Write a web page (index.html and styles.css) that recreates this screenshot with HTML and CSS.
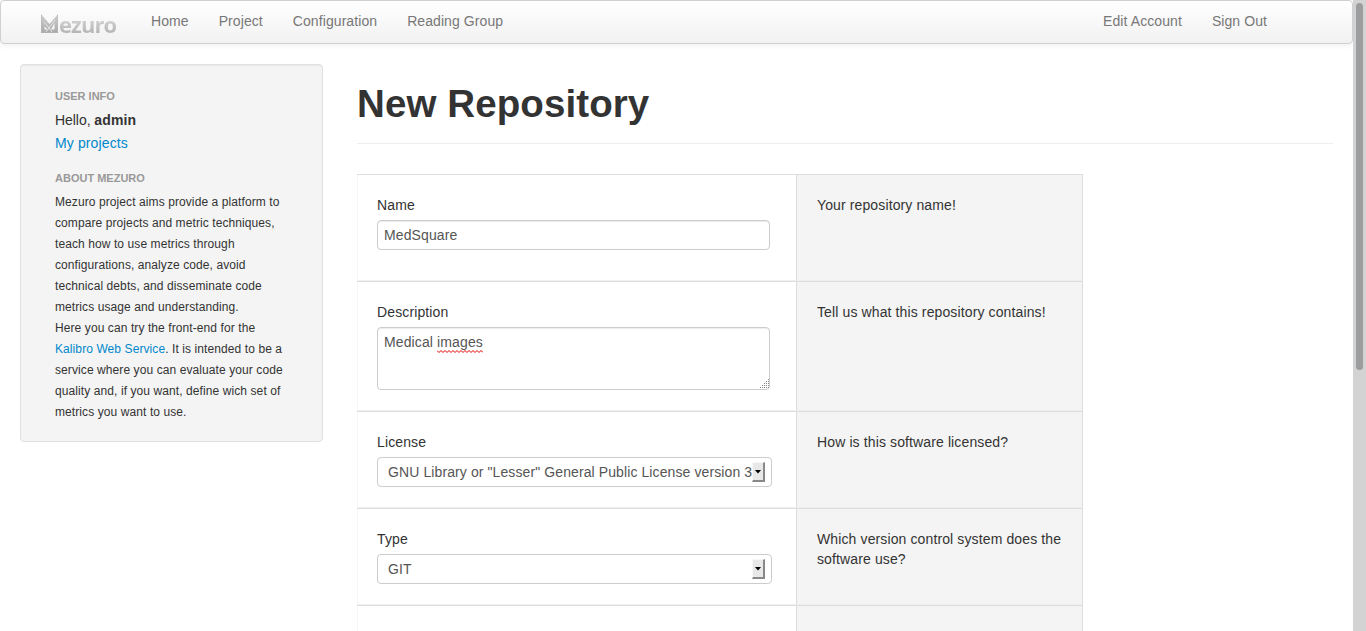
FILE: index.html
```html
<!DOCTYPE html>
<html lang="en">
<head>
<meta charset="utf-8">
<title>New Repository</title>
<link rel="stylesheet" href="styles.css">
</head>
<body>
<div class="window">
  <div class="page">
    <nav class="navbar">
      <a class="brand" aria-label="Mezuro">
        <svg class="brand-mark" width="18" height="20" viewBox="0 0 18 20">
          <defs><linearGradient id="g" x1="0" y1="0" x2="0" y2="1"><stop offset="0" stop-color="#d2d2d2"/><stop offset="1" stop-color="#a8a8a8"/></linearGradient></defs>
          <path d="M0 0L8.500 10L17 0V19H0Z" fill="url(#g)"/>
          <path d="M3.500 12.500L7 15.500H3.500ZM13.500 9V15.500H10Z" fill="#f4f4f4"/>
          <path d="M3 8l9 11M14 6L5 18" stroke="#e4e4e4" stroke-width="1" fill="none"/>
          <path d="M.5 1V18.500H16.500V1" fill="none" stroke="#b8b8b8" stroke-dasharray="1 1"/>
        </svg><span class="brand-text">ezuro</span>
      </a>
      <div class="links"><a>Home</a><a>Project</a><a>Configuration</a><a>Reading Group</a></div>
      <div class="links account"><a>Edit Account</a><a>Sign Out</a></div>
    </nav>
    <div class="columns">
      <aside class="well">
        <h2 class="nav-header">USER INFO</h2>
        <p class="hello">Hello, <b>admin</b></p>
        <p class="mine"><a class="link">My projects</a></p>
        <h2 class="nav-header about-title">ABOUT MEZURO</h2>
        <p class="about">
          <span>Mezuro project aims provide a platform to</span>
          <span>compare projects and metric techniques,</span>
          <span>teach how to use metrics through</span>
          <span>configurations, analyze code, avoid</span>
          <span>technical debts, and disseminate code</span>
          <span>metrics usage and understanding.</span>
          <span>Here you can try the front-end for the</span>
          <span><a class="link">Kalibro Web Service</a>. It is intended to be a</span>
          <span>service where you can evaluate your code</span>
          <span>quality and, if you want, define wich set of</span>
          <span>metrics you want to use.</span>
        </p>
      </aside>
      <main class="main">
        <h1 class="title">New Repository</h1>
        <div class="form">
          <div class="row row-name">
            <div class="field"><label class="label">Name</label><div class="control input">MedSquare</div></div>
            <div class="help">Your repository name!</div>
          </div>
          <div class="row row-desc">
            <div class="field"><label class="label">Description</label>
              <div class="control area">Medical <span class="misspelt">images<svg class="wave" width="46" height="3" viewBox="0 0 46 3"><path d="M0 .5L2 2.500L4 .5L6 2.500L8 .5L10 2.500L12 .5L14 2.500L16 .5L18 2.500L20 .5L22 2.500L24 .5L26 2.500L28 .5L30 2.500L32 .5L34 2.500L36 .5L38 2.500L40 .5L42 2.500L44 .5L46 2.500" fill="none" stroke="#e00000"/></svg></span>
                <svg class="grip" width="10" height="10" viewBox="0 0 10 10"><path d="M9.500 0V10M7.500 2V10M5.500 4V10M3.500 6V10M1.500 8V10" stroke="#888" stroke-dasharray="1 1" fill="none"/></svg>
              </div></div>
            <div class="help">Tell us what this repository contains!</div>
          </div>
          <div class="row row-select">
            <div class="field"><label class="label">License</label><div class="control select"><span class="license">GNU Library or "Lesser" General Public License version 3</span><i class="arrow"></i></div></div>
            <div class="help">How is this software licensed?</div>
          </div>
          <div class="row row-select">
            <div class="field"><label class="label">Type</label><div class="control select"><span>GIT</span><i class="arrow"></i></div></div>
            <div class="help">Which version control system does the<br>software use?</div>
          </div>
          <div class="row row-next"><div class="field"></div><div class="help"></div></div>
        </div>
      </main>
    </div>
  </div>
  <div class="scrollbar"><div class="thumb"></div></div>
</div>
</body>
</html>
```
FILE: styles.css
```css
* { box-sizing: border-box; }
body {
  margin: 0;
  overflow: hidden;
  color: #333;
  background: #fff;
  font: 14px/20px "Liberation Sans", Arial, sans-serif;
  letter-spacing: .12px;
}
p, h1, h2 { margin: 0; }
.window { display: flex; height: 631px; overflow: hidden; }
.page { width: 1353px; }
.navbar {
  display: flex;
  height: 44px;
  padding: 0 70px 0 40px;
  border: 1px solid #d0d0d0;
  border-radius: 4px;
  background: linear-gradient(#fff, #f1f1f1);
  box-shadow: 0 1px 6px rgba(0, 0, 0, .08);
}
.brand { display: flex; width: 94px; padding-top: 13px; }
.brand-mark { flex: none; }
.brand-text {
  font: bold 22px/20px "Open Sans", "Noto Sans", sans-serif;
  letter-spacing: -.9px;
  color: transparent;
  background: linear-gradient(#d2d2d2 20%, #a4a4a4 90%);
  background-clip: text;
  -webkit-background-clip: text;
}
.links { display: flex; gap: 30px; padding: 10px 0 0 16px; color: #777; letter-spacing: .08px; }
.account { margin-left: auto; padding-right: 15px; }
.columns { display: flex; align-items: flex-start; gap: 34px; padding: 20px 20px 0; }
.well {
  flex: none;
  width: 303px;
  height: 378px;
  padding: 21px 10px 0 34px;
  border: 1px solid #e0e0e0;
  border-radius: 4px;
  background: #f4f4f4;
  box-shadow: inset 0 1px 1px rgba(0, 0, 0, .05);
}
.nav-header { font-size: 11px; line-height: 20px; color: #999; letter-spacing: 0; }
.hello { height: 20px; margin-top: 4px; letter-spacing: -.05px; }
.hello b { letter-spacing: .15px; }
.mine { margin-top: 3px; }
.about-title { margin-top: 15px; }
.link { color: #0088cc; }
.about { display: flex; flex-direction: column; padding-top: 4px; font-size: 12px; line-height: 21px; letter-spacing: .09px; white-space: nowrap; }
.main { flex: 1; }
.title { height: 80px; padding-top: 20px; border-bottom: 1px solid #eee; font-size: 38.5px; line-height: 40px; letter-spacing: .1px; }
.form { width: 726px; margin-top: 30px; }
.row { display: flex; border-top: 1px solid #ddd; }
.row-name { height: 107px; }
.row-desc { height: 130px; }
.row-select { height: 97px; }
.row-next { height: 97px; }
.field { width: 439px; padding: 20px 0 0 19px; border-left: 1px solid #f7f7f7; border-bottom: 1px solid #f0f0f0; }
.help { width: 287px; padding: 20px 0 0 20px; border-left: 1px solid #ddd; border-right: 1px solid #ddd; border-bottom: 1px solid #eee; background: #f4f4f4; }
.label { display: block; }
.control { margin-top: 5px; padding: 4px 6px; border: 1px solid #ccc; border-radius: 4px; color: #555; box-shadow: inset 0 1px 1px rgba(0, 0, 0, .075); }
.input { width: 393px; height: 30px; }
.area { position: relative; width: 393px; height: 63px; }
.select { display: flex; justify-content: space-between; width: 395px; height: 30px; padding-left: 10px; box-shadow: none; white-space: nowrap; }
.license { width: 364px; letter-spacing: .1px; }
.arrow { flex: none; width: 13px; height: 20px; border: 1px solid #f7f7f7; border-right: 2px solid #888; border-bottom: 2px solid #888; background: #e8e8e8; display: flex; align-items: center; justify-content: center; }
.arrow::before { content: ""; width: 7px; height: 4px; background: #000; clip-path: polygon(0 0, 100% 0, 50% 100%); }
.misspelt { position: relative; }
.wave { position: absolute; left: 0; bottom: -3px; }
.grip { position: absolute; right: 0; bottom: 0; }
.scrollbar { width: 13px; padding: 3px; background: #d3d3d3; }
.thumb { width: 7px; height: 367px; border-radius: 4px; background: #9b9d9e; }
```
